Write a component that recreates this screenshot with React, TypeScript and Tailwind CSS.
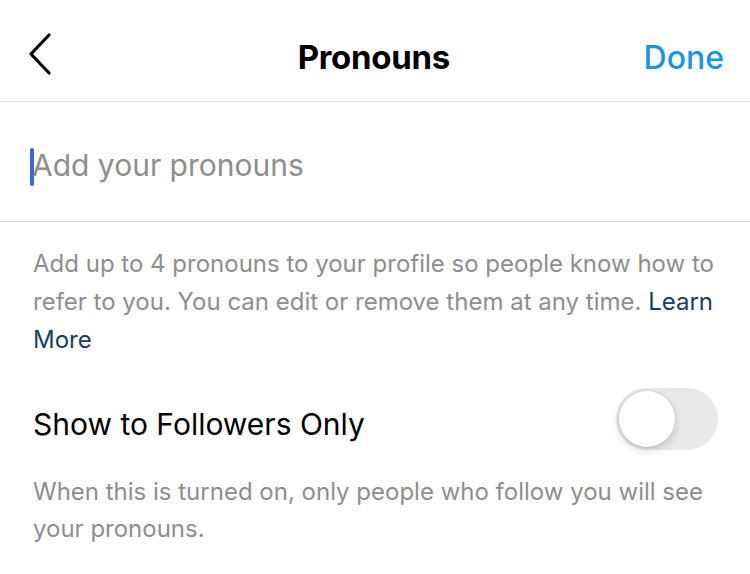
export default function App() {
  return (
    <div className="w-[750px] h-[574px] bg-white overflow-hidden font-['Inter',sans-serif]">
      {/* header */}
      <div className="h-[102px] border-b border-[#dbdbdb] flex items-center justify-between px-[26px]">
        <svg width="28" height="44" viewBox="0 0 28 44" className="mt-[6px]">
          <path d="M23 3 L5 22 L23 41" fill="none" stroke="#000" strokeWidth="3.2" strokeLinecap="round" strokeLinejoin="round" />
        </svg>
        <h1 className="text-[33px] font-bold text-black tracking-[-0.3px] ml-[50px] mt-[14px]">Pronouns</h1>
        <button className="text-[32px] font-medium text-[#1a96e8] mr-0 mt-[14px]">Done</button>
      </div>

      {/* input */}
      <div className="h-[121px] border-b border-[#d4d4d4] flex items-center pl-[30px] mt-[-1px]">
        <div className="w-[4px] h-[38px] bg-[#4560e0] rounded-full mt-[12px]"></div>
        <span className="text-[30px] text-[#8e8e8e] -ml-[2px] mt-[8px]">Add your pronouns</span>
      </div>

      {/* description */}
      <p className="pl-[33px] pr-[30px] pt-[23px] text-[24px] leading-[38px] text-[#8e8e8e]">
        Add up to 4 pronouns to your profile so people know how to refer to you. You can edit or remove them at any time.{" "}
        <span className="text-[#1b3a6a]">Learn More</span>
      </p>

      {/* toggle row */}
      <div className="flex items-center justify-between pl-[33px] pr-[32px] mt-[29px]">
        <span className="text-[30px] text-black mt-[10px]">Show to Followers Only</span>
        <div className="w-[102px] h-[62px] rounded-full bg-[#e9e9eb] p-[3px] flex items-center">
          <div className="w-[56px] h-[56px] rounded-full bg-white shadow-[0_3px_8px_rgba(0,0,0,0.18),0_0_0_1px_rgba(0,0,0,0.04)]"></div>
        </div>
      </div>

      <p className="px-[33px] pt-[23px] text-[24px] leading-[37px] text-[#8e8e8e]">
        When this is turned on, only people who follow you will see your pronouns.
      </p>
    </div>
  );
}
